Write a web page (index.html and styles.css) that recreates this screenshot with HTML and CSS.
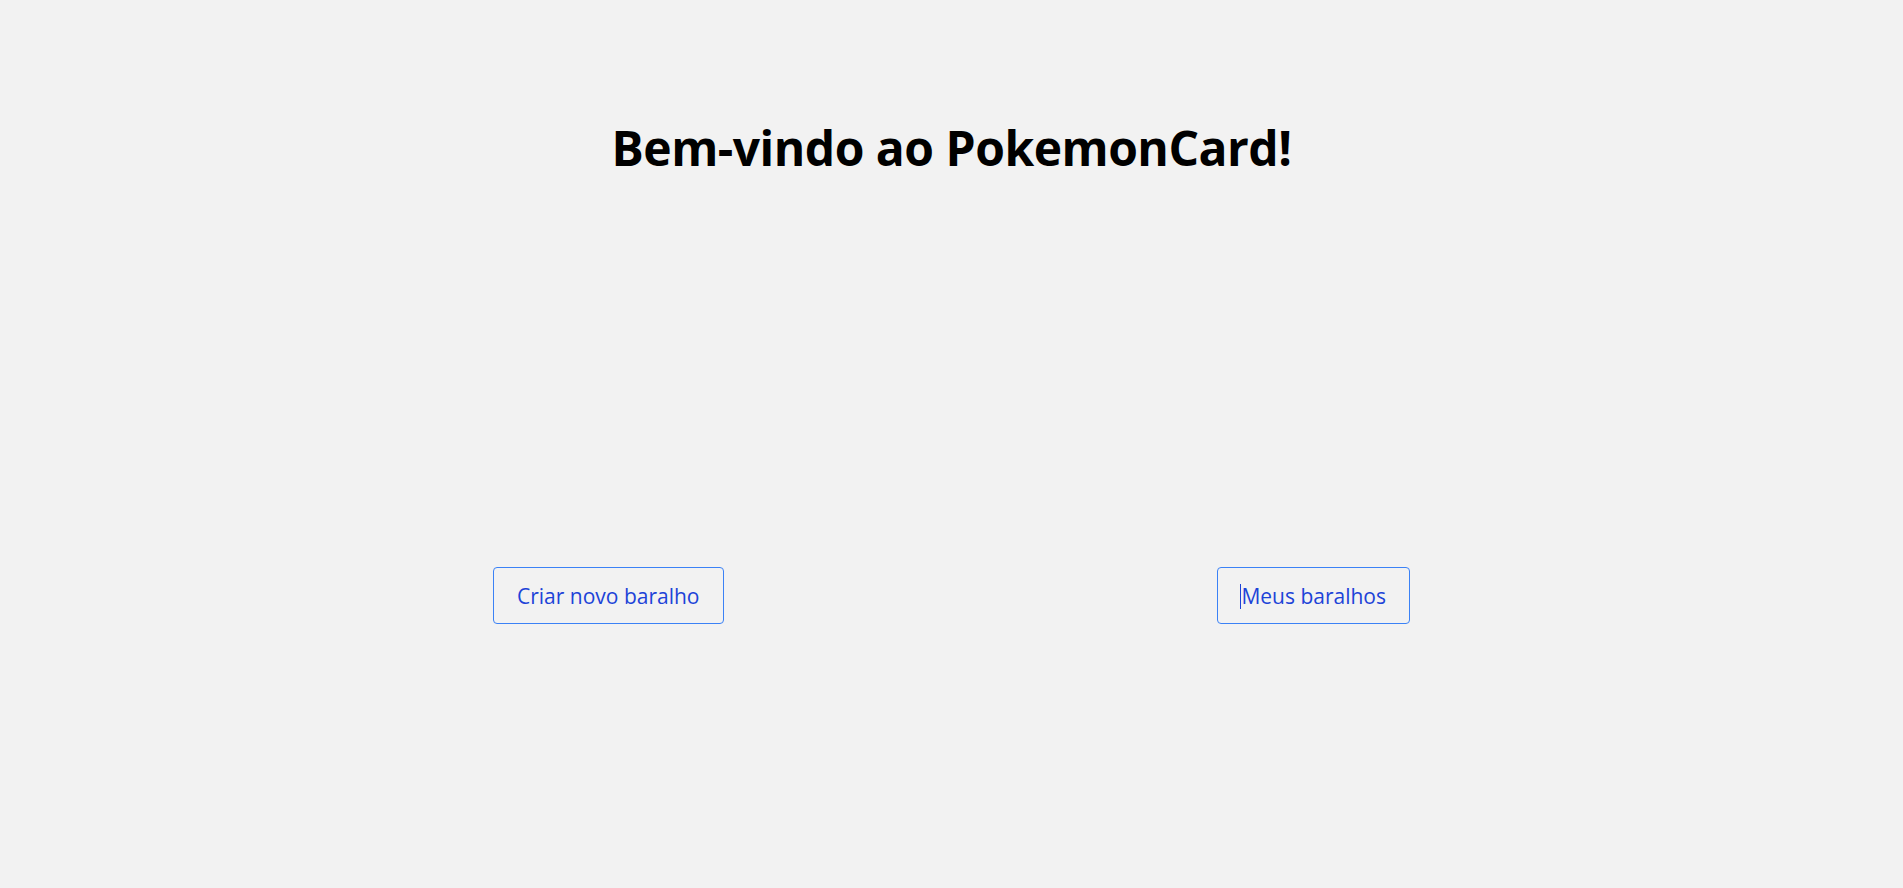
FILE: index.html
```html
<!DOCTYPE html>
<html lang="pt-BR">
<head>
<meta charset="utf-8">
<title>PokemonCard</title>
<link rel="stylesheet" href="styles.css">
</head>
<body>
<main class="home">
  <h1 class="title">Bem-vindo ao PokemonCard!</h1>
  <div class="actions">
    <button class="btn">Criar novo baralho</button>
    <button class="btn"><span class="caret"></span>Meus baralhos</button>
  </div>
</main>
</body>
</html>
```
FILE: styles.css
```css
html, body {
  margin: 0;
  padding: 0;
  background: #f2f2f2;
  height: 100%;
}
body {
  font-family: "Open Sans", "Noto Sans", sans-serif;
  color: #000;
}
.home {
  display: flex;
  flex-direction: column;
  align-items: center;
  padding-top: 112px;
}
.title {
  margin: 0;
  font-size: 48px;
  font-weight: 700;
  line-height: 72px;
  letter-spacing: -0.5px;
}
.actions {
  align-self: stretch;
  display: flex;
  justify-content: space-between;
  padding: 0 493px;
  margin-top: 383px;
}
.btn {
  position: relative;
  height: 57px;
  padding: 0 23px;
  border: 1px solid #3b82f6;
  border-radius: 4px;
  background: transparent;
  color: #1d43d8;
  font-family: "Open Sans", "Noto Sans", sans-serif;
  font-size: 21px;
  cursor: pointer;
}
.caret {
  position: absolute;
  left: 22px;
  top: 16px;
  width: 1px;
  height: 25px;
  background: #1d43d8;
}
```
